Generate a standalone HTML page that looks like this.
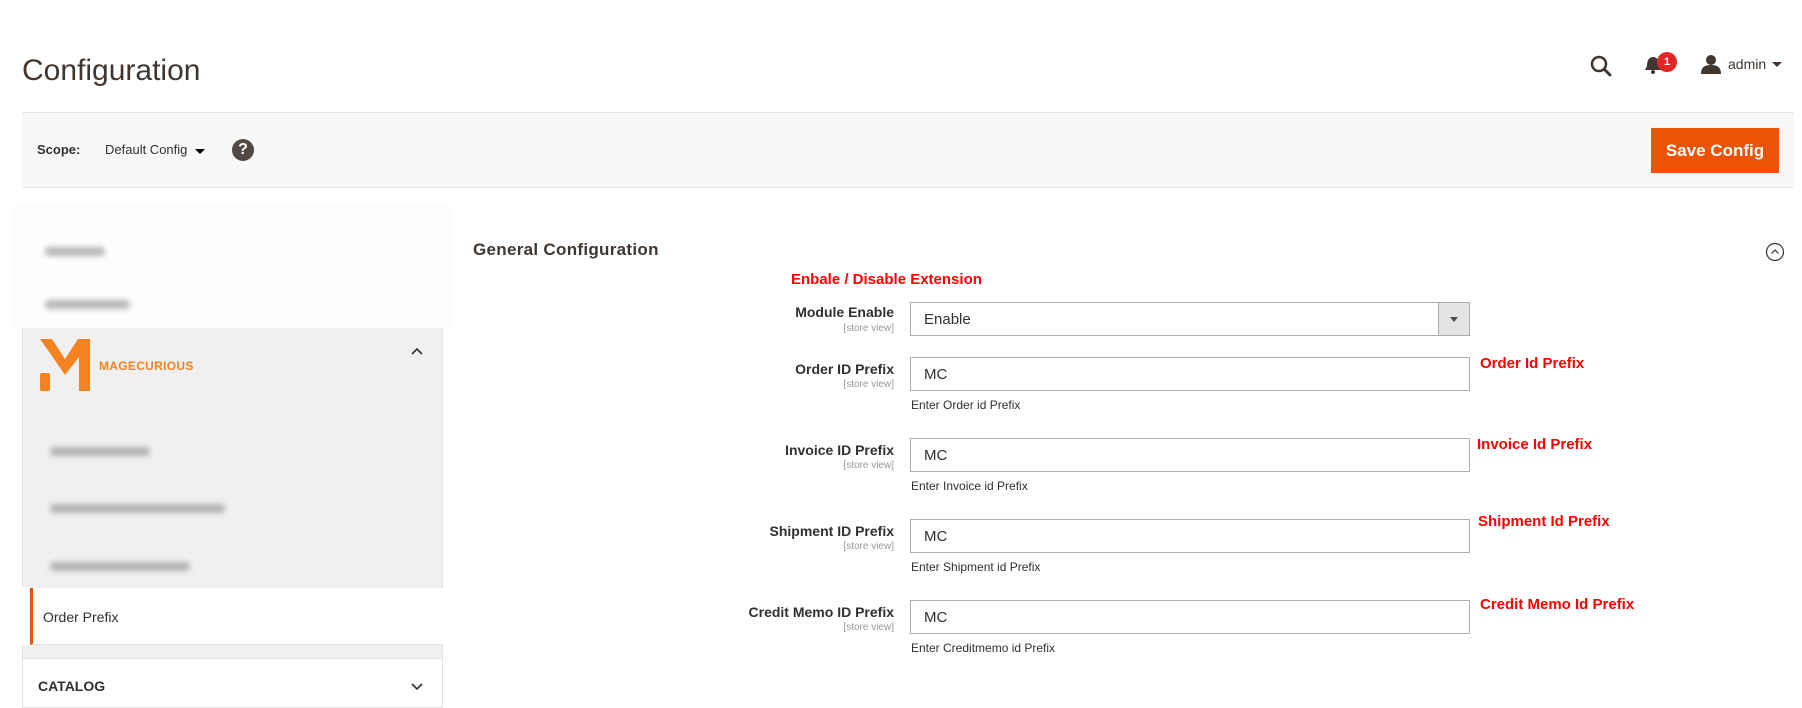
<!DOCTYPE html>
<html><head><meta charset="utf-8">
<style>
*{box-sizing:border-box;margin:0;padding:0}
body{width:1802px;height:704px;background:#fff;font-family:"Liberation Sans",sans-serif;color:#303030;position:relative;overflow:hidden}
.a{position:absolute;white-space:nowrap}
.lbl{position:absolute;right:908px;text-align:right;font-size:14px;font-weight:bold;color:#303030}
.sv{position:absolute;right:908px;font-size:10px;color:#999}
.inp{position:absolute;left:910px;width:560px;height:34px;border:1px solid #adadad;background:#fff;font-size:15px;padding:8px 0 0 13px;color:#303030}
.note{position:absolute;left:911px;font-size:12px;color:#303030}
.red{position:absolute;color:#f00;font-weight:bold;font-size:15px;font-family:"Liberation Sans",Arial,sans-serif}
.blur{position:absolute;filter:blur(3px);background:#888;height:9px;border-radius:4px;opacity:.6}
</style></head><body>
<div class="a" style="left:22px;top:54px;font-size:30px;color:#41362f">Configuration</div>

<svg class="a" style="left:1589px;top:54px" width="24" height="24" viewBox="0 0 24 24"><circle cx="10" cy="10" r="7" fill="none" stroke="#41362f" stroke-width="2.5"/><path d="M15 15 L21 21" stroke="#41362f" stroke-width="3" stroke-linecap="round"/></svg>
<svg class="a" style="left:1643px;top:55px" width="20" height="22" viewBox="0 0 20 22"><path d="M10 2 C5 2 4 7 4 11 L2 15 L18 15 L16 11 C16 7 15 2 10 2Z" fill="#41362f"/><circle cx="10" cy="17" r="2" fill="#41362f"/></svg>
<div class="a" style="left:1657px;top:52px;width:20px;height:20px;border-radius:50%;background:#e22626;color:#fff;font-size:11px;font-weight:bold;text-align:center;line-height:20px">1</div>
<svg class="a" style="left:1700px;top:53px" width="22" height="22" viewBox="0 0 22 22"><circle cx="11" cy="7" r="5" fill="#41362f"/><path d="M1 21 C1 14 5 12 11 12 C17 12 21 14 21 21Z" fill="#41362f"/></svg>
<div class="a" style="left:1728px;top:56px;font-size:14px;color:#41362f">admin</div>
<div class="a" style="left:1772px;top:62px;border-left:5px solid transparent;border-right:5px solid transparent;border-top:5px solid #41362f"></div>

<div class="a" style="left:22px;top:112px;width:1772px;height:76px;background:#f8f8f8;border-top:1px solid #e3e3e3;border-bottom:1px solid #e3e3e3"></div>
<div class="a" style="left:37px;top:142px;font-size:13px;font-weight:bold;color:#303030">Scope:</div>
<div class="a" style="left:105px;top:142px;font-size:13px;color:#303030">Default Config</div>
<div class="a" style="left:195px;top:149px;border-left:5px solid transparent;border-right:5px solid transparent;border-top:5px solid #000"></div>
<div class="a" style="left:232px;top:139px;width:22px;height:22px;border-radius:50%;background:#514943;color:#fff;font-weight:bold;font-size:16px;text-align:center;line-height:22px">?</div>
<div class="a" style="left:1651px;top:128px;width:128px;height:45px;background:#eb5202;color:#fff;font-size:17px;font-weight:bold;text-align:center;line-height:45px">Save Config</div>

<!-- sidebar -->
<div class="a" style="left:12px;top:205px;width:440px;height:123px;background:#fdfdfd"></div>
<div class="blur" style="left:45px;top:247px;width:60px"></div>
<div class="blur" style="left:45px;top:300px;width:85px"></div>
<div class="a" style="left:22px;top:328px;width:421px;height:260px;background:#f0f0f0;border-left:1px solid #e3e3e3;border-right:1px solid #e3e3e3"></div>
<svg class="a" style="left:40px;top:339px" width="50" height="52" viewBox="0 0 50 52"><path d="M0 0 H12 L25 20 L38 0 H50 V52 H39 V18 L25 36 L10 14 Z" fill="#f58220"/><rect x="0" y="34" width="10" height="18" rx="2" fill="#f58220"/></svg>
<div class="a" style="left:99px;top:359px;font-size:12px;font-weight:bold;color:#f58220;letter-spacing:.3px">MAGECURIOUS</div>
<svg class="a" style="left:410px;top:346px" width="14" height="10" viewBox="0 0 14 10"><path d="M2 8 L7 3 L12 8" fill="none" stroke="#303030" stroke-width="1.6"/></svg>
<div class="blur" style="left:50px;top:447px;width:100px"></div>
<div class="blur" style="left:50px;top:504px;width:175px"></div>
<div class="blur" style="left:50px;top:562px;width:140px"></div>
<div class="a" style="left:30px;top:588px;width:413px;height:57px;background:#fff;border-left:3px solid #eb5202;border-bottom:1px solid #e3e3e3"></div>
<div class="a" style="left:43px;top:609px;font-size:14px;color:#303030">Order Prefix</div>
<div class="a" style="left:22px;top:645px;width:421px;height:13px;background:#f0f0f0;border-left:1px solid #e3e3e3;border-right:1px solid #e3e3e3"></div>
<div class="a" style="left:22px;top:658px;width:421px;height:50px;background:#fff;border:1px solid #e3e3e3"></div>
<div class="a" style="left:38px;top:678px;font-size:14px;font-weight:bold;color:#303030">CATALOG</div>
<svg class="a" style="left:410px;top:682px" width="14" height="10" viewBox="0 0 14 10"><path d="M2 2 L7 7 L12 2" fill="none" stroke="#303030" stroke-width="1.6"/></svg>

<!-- form -->
<div class="a" style="left:473px;top:240px;font-size:17px;font-weight:bold;color:#41362f;letter-spacing:.3px">General Configuration</div>
<svg class="a" style="left:1765px;top:242px" width="20" height="20" viewBox="0 0 20 20"><circle cx="10" cy="10" r="8.5" fill="none" stroke="#303030" stroke-width="1.2"/><path d="M6.5 11.5 L10 8 L13.5 11.5" fill="none" stroke="#303030" stroke-width="1.2"/></svg>
<div class="red" style="left:791px;top:271px">Enbale / Disable Extension</div>

<div class="lbl" style="top:304px">Module Enable</div><div class="sv" style="top:323px">[store view]</div>
<div class="inp" style="top:302px">Enable</div>
<div class="a" style="left:1438px;top:303px;width:31px;height:32px;background:#e3e3e3;border-left:1px solid #adadad"></div>
<div class="a" style="left:1450px;top:317px;border-left:4px solid transparent;border-right:4px solid transparent;border-top:5px solid #514943"></div>

<div class="lbl" style="top:361px">Order ID Prefix</div><div class="sv" style="top:379px">[store view]</div>
<div class="inp" style="top:357px">MC</div><div class="note" style="top:398px">Enter Order id Prefix</div>
<div class="red" style="left:1480px;top:355px">Order Id Prefix</div>

<div class="lbl" style="top:442px">Invoice ID Prefix</div><div class="sv" style="top:460px">[store view]</div>
<div class="inp" style="top:438px">MC</div><div class="note" style="top:479px">Enter Invoice id Prefix</div>
<div class="red" style="left:1477px;top:436px">Invoice Id Prefix</div>

<div class="lbl" style="top:523px">Shipment ID Prefix</div><div class="sv" style="top:541px">[store view]</div>
<div class="inp" style="top:519px">MC</div><div class="note" style="top:560px">Enter Shipment id Prefix</div>
<div class="red" style="left:1478px;top:513px">Shipment Id Prefix</div>

<div class="lbl" style="top:604px">Credit Memo ID Prefix</div><div class="sv" style="top:622px">[store view]</div>
<div class="inp" style="top:600px">MC</div><div class="note" style="top:641px">Enter Creditmemo id Prefix</div>
<div class="red" style="left:1480px;top:596px">Credit Memo Id Prefix</div>
</body></html>
